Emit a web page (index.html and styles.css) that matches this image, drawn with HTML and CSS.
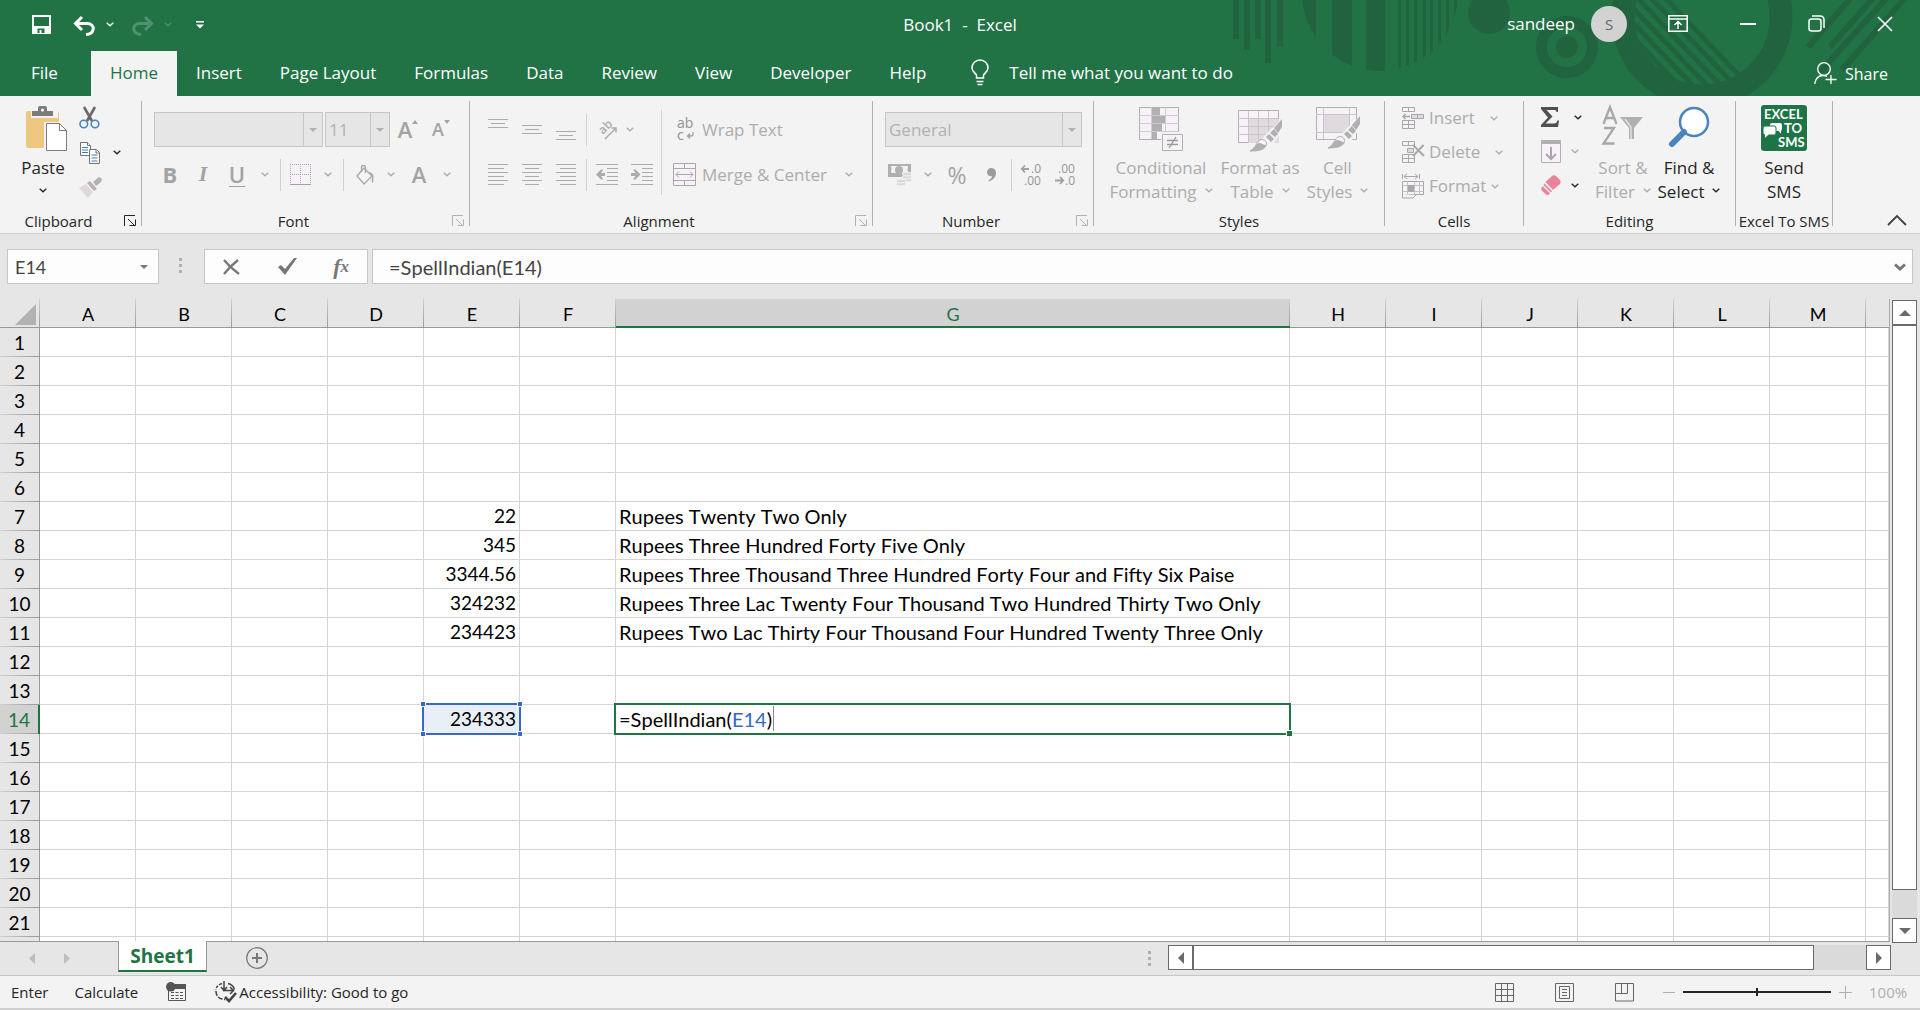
FILE: index.html
```html
<!DOCTYPE html>
<html lang="en">
<head>
<meta charset="utf-8">
<title>Book1 - Excel</title>
<link rel="stylesheet" href="styles.css">
</head>
<body>
<svg class="defs" aria-hidden="true">
  <symbol id="chev" viewBox="0 0 8 5"><path d="M.7.8 4 3.8 7.300.8" fill="none" stroke="currentColor" stroke-width="1.400"/></symbol>
  <symbol id="tri" viewBox="0 0 8 4"><path d="M0 0h8L4 4z" fill="currentColor"/></symbol>
  <symbol id="launch" viewBox="0 0 12 12"><path d="M.5 11V.5H11M4 4l6 6M5.500 10.500h6V4.500" fill="none" stroke="currentColor"/></symbol>
  <symbol id="brush" viewBox="0 0 34 33"><path d="M1 32c6-3 6-9 10-11 4-2 8 2 6 6-2 4-8 5-16 5z" fill="#f6f2f8" stroke="#b1afb1"/><path d="M1 32c6-3 6-8 9-8 3 0 4 2 7 2-2 5-8 6-16 6z" fill="#b1afb1"/><path d="m20 15 5 5-3 3-5-5zM25 10l4 5-3 3-5-4zM33 0v8l-4 6-4-5z" fill="#b1afb1"/></symbol>
</svg>

<header class="top">
  <svg class="pattern" width="700" height="96" viewBox="1220 0 700 96" aria-hidden="true">
    <defs>
      <clipPath id="c1"><circle cx="1380" cy="-7" r="78"/></clipPath>
      <clipPath id="c2"><circle cx="1702" cy="17" r="68"/></clipPath>
    </defs>
    <g fill="#22633f">
      <path d="M1233 0h6v39h-6zM1244 0h6v50h-6zM1255 0h6v39h-6zM1265 0h6v63h-6zM1277 0h6v46h-6z"/>
      <path clip-path="url(#c1)" d="M1300 0h16v80h-16zM1332 0h20v80h-20zM1366 0h19v80h-19zM1398 0h3v80h-3zM1406 0h3v80h-3zM1414 0h3v80h-3zM1423 0h3v80h-3zM1430 0h3v80h-3zM1438 0h3v80h-3zM1446 0h3v80h-3zM1454 0h3v80h-3z"/>
      <circle cx="1489" cy="13" r="21"/>
      <circle cx="1567" cy="47" r="11"/>
    </g>
    <g fill="none" stroke="#22633f">
      <circle cx="1567" cy="47" r="25.500" stroke-width="11"/>
      <circle cx="1702" cy="17" r="79" stroke-width="23"/>
      <path clip-path="url(#c2)" stroke-width="5" d="m1578-20 110 115M1592-20l110 115M1606-20l110 115M1620-20l110 115M1634-20l110 115M1648-20l110 115"/>
      <path stroke-width="6" d="m1808 47 50-57M1830 47l50-57M1820 72l74-82M1842 70l70-80"/>
    </g>
  </svg>

  <div class="titlebar">
    <div class="quick">
      <button class="ib q-save" aria-label="Save"><svg width="19" height="19"><path d="M1 1h17v17H1z" fill="none" stroke="#fff" stroke-width="2"/><path d="M2 11h15v7H2z" fill="#fff"/><path d="M5.500 13.500h7V18h-3v-3h-2v3h-2z" fill="#217346"/></svg></button>
      <button class="ib q-undo" aria-label="Undo"><svg width="23" height="20"><path d="M2 7.500h12c9 0 8 11-1 11" fill="none" stroke="#fff" stroke-width="3"/><path d="M9 1 2.500 7.500 9 14" fill="none" stroke="#fff" stroke-width="3"/></svg></button>
      <button class="ib q-ch" aria-label="Undo list"><svg width="8" height="5"><use href="#chev"/></svg></button>
      <button class="ib q-redo" aria-label="Redo"><svg width="23" height="20"><path d="M21 7.500H9c-9 0-8 11 1 11M14 1l6.500 6.500L14 14" fill="none" stroke="currentColor" stroke-width="3"/></svg></button>
      <button class="ib q-ch dim" aria-label="Redo list"><svg width="8" height="5"><use href="#chev"/></svg></button>
      <button class="ib q-more" aria-label="Customize toolbar"><svg width="8" height="8"><path d="M0 0h8v1.500H0zM0 3.500h8L4 7.500z" fill="#fff"/></svg></button>
    </div>
    <div class="doc">Book1&nbsp; -&nbsp; Excel</div>
    <div class="account">
      <span>sandeep</span><span class="avatar">S</span>
      <div class="wins">
        <button class="ib" aria-label="Ribbon options"><svg width="20" height="17" fill="none" stroke="#fff" stroke-width="1.500"><path d="M.8.8h18.400v15.400H.8zM.8 4h18.400M10 14V6.500M6.500 10 10 6.500l3.500 3.500"/></svg></button>
        <button class="ib" aria-label="Minimize"><svg width="16" height="2"><path d="M0 0h16v2H0z" fill="#fff"/></svg></button>
        <button class="ib" aria-label="Restore"><svg width="17" height="17" fill="none" stroke="#fff" stroke-width="1.500"><rect x="1" y="4" width="12" height="12" rx="2.500"/><path d="M4 1h8q4 0 4 4v8"/></svg></button>
        <button class="ib" aria-label="Close"><svg width="16" height="16"><path d="m1 1 14 14M15 1 1 15" stroke="#fff" stroke-width="1.600"/></svg></button>
      </div>
    </div>
  </div>

  <nav class="tabs">
    <button class="tab file">File</button><button class="tab home">Home</button><button class="tab">Insert</button><button class="tab">Page Layout</button><button class="tab">Formulas</button><button class="tab">Data</button><button class="tab">Review</button><button class="tab">View</button><button class="tab">Developer</button><button class="tab">Help</button>
    <button class="tell"><svg width="18" height="26" fill="none" stroke="#fff" stroke-width="1.500"><path d="M5.500 18v-3C3.500 12.500 1 11 1 8a8 8 0 0 1 16 0c0 3-2.500 4.500-4.500 7v3zM5.500 21.500h7M6.500 24.500h5"/></svg>Tell me what you want to do</button>
    <button class="share"><svg width="23" height="23" fill="none" stroke="#fff" stroke-width="1.300"><circle cx="10" cy="7" r="6.300"/><path d="M.7 22c1-6 4-8.500 8.300-8.500 2 0 3 .3 4 1M17 13v9M11.500 17.500h11"/></svg>Share</button>
  </nav>
</header>

<section class="ribbon">
  <div class="group g-clip">
    <div class="body">
      <button class="big paste"><svg width="42" height="46"><path d="M2 5h30v37H2q-2 0-2-2V7q0-2 2-2z" fill="#eec880"/><path d="M33 7v12H20v18h2V5h9q2 0 2 2z" fill="#eec880"/><path d="M5 4h27v8H5z" fill="#f3f3f3"/><path d="M6 5h6V2q0-2 2-2h5q2 0 2 2v3h6v5H6z" fill="#7c7c7c"/><circle cx="16.500" cy="4" r="1.500" fill="#fff"/><path d="M18 16h17l7 7v23H18z" fill="#f3f3f3"/><path d="M20.500 17.500h13l7 7v20h-20z" fill="#fff" stroke="#7c7c7c"/><path d="M33.500 17.500v7h7" fill="none" stroke="#7c7c7c"/></svg><span>Paste</span><svg class="ch" width="8" height="5"><use href="#chev"/></svg></button>
      <div class="stack">
        <button class="ib" aria-label="Cut"><svg width="21" height="22"><path d="m5 0 8 14M16 0 8 14" stroke="#6a6a6a" stroke-width="2.600"/><g fill="none" stroke="#4a84bf" stroke-width="1.600"><circle cx="4.800" cy="17" r="3.800"/><circle cx="16" cy="17" r="3.800"/></g></svg></button>
        <span class="pair"><button class="ib" aria-label="Copy"><svg width="21" height="22" fill="#fff" stroke="#737373"><path d="M1.500.5h7l3 3v10h-10z"/><path d="M8.500.5v3h3" /><path d="M3 5.500h6M3 8h6M3 10.500h6" stroke="#3f7cb5"/><path d="M10.500 7.500h7l3 3v11h-10z"/><path d="M17 7.500v3.500h3.500"/><path d="M12.500 13h6M12.500 16h6M12.500 19h6" stroke="#3f7cb5"/></svg></button><button class="ib" aria-label="Copy options"><svg width="8" height="5"><use href="#chev"/></svg></button></span>
        <button class="ib" aria-label="Format Painter"><svg width="23" height="21"><path d="m0 11 7-4 7 8-5 6z" fill="#dcd8dc"/><path d="m8 6 3-2 7 8-3 2zM14 5l6-5 3 2-1 3-5 4z" fill="#b3b1b3"/></svg></button>
      </div>
    </div>
    <div class="foot"><span>Clipboard</span><button class="ib" aria-label="Clipboard settings"><svg width="12" height="12"><use href="#launch"/></svg></button></div>
  </div>

  <div class="group g-font off">
    <div class="body">
      <div class="row r1">
        <span class="combo"><select disabled aria-label="Font"><option></option></select><i><svg width="8" height="4"><use href="#tri"/></svg></i></span>
        <span class="combo"><select disabled aria-label="Font size"><option>11</option></select><i><svg width="8" height="4"><use href="#tri"/></svg></i></span>
        <button class="ib letter grow" aria-label="Increase font size">A<svg width="6" height="4"><path d="M0 4 3 0l3 4z" fill="currentColor"/></svg></button>
        <button class="ib letter shrink" aria-label="Decrease font size">A<svg width="6" height="4"><path d="M0 0h6L3 4z" fill="currentColor"/></svg></button>
      </div>
      <div class="row r2">
        <button class="ib letter b">B</button><button class="ib letter i">I</button><button class="ib letter u">U</button><button class="ib" aria-label="Underline options"><svg width="8" height="5"><use href="#chev"/></svg></button><i class="sep"></i>
        <button class="ib" aria-label="Borders"><svg width="21" height="21"><path d="M0 0h21v21H0z" fill="#f6f2f8"/><path d="M0 .5h21M0 10.500h21M.5 0v20M10.500 0v20M20.500 0v20" stroke="#a9a7a9" stroke-dasharray="1 1"/><path d="M0 20.500h21" stroke="#a0a0a0"/></svg></button><button class="ib" aria-label="Border options"><svg width="8" height="5"><use href="#chev"/></svg></button><i class="sep"></i>
        <button class="ib" aria-label="Fill colour"><svg width="19" height="20"><path d="m8 3 8 8-8 8-7-8z" fill="#f6f2f8" stroke="#a9a7a9" stroke-width="1.300"/><path d="M5.500 7V2q0-1.500 2-1.500t2 1.500v6" fill="none" stroke="#a9a7a9" stroke-width="1.300"/><path d="M13 7c5 1 5 4 4 11-2-1-1-4-1-7z" fill="#a9a7a9"/></svg></button><button class="ib" aria-label="Fill options"><svg width="8" height="5"><use href="#chev"/></svg></button>
        <button class="ib letter" aria-label="Font colour">A</button><button class="ib" aria-label="Font colour options"><svg width="8" height="5"><use href="#chev"/></svg></button>
      </div>
    </div>
    <div class="foot"><span>Font</span><button class="ib" aria-label="Font settings"><svg width="12" height="12"><use href="#launch"/></svg></button></div>
  </div>

  <div class="group g-align off">
    <div class="body">
      <div class="acols">
        <div class="row">
          <button class="ib" aria-label="Top align"><svg width="20" height="22"><path d="M0 .5h20M3 4.500h14M0 8.500h20" stroke="currentColor"/></svg></button>
          <button class="ib" aria-label="Middle align"><svg width="20" height="22"><path d="M0 6.500h20M3 10.500h14M0 14.500h20" stroke="currentColor"/></svg></button>
          <button class="ib" aria-label="Bottom align"><svg width="20" height="22"><path d="M0 12.500h20M3 16.500h14M0 20.500h20" stroke="currentColor"/></svg></button>
          <i class="sep"></i>
          <button class="ib" aria-label="Orientation"><svg width="21" height="20"><text x="0" y="0" transform="translate(6 15) rotate(-45)" font-size="12" font-weight="600" fill="currentColor">ab</text><path d="M8 19 19 8M14.500 8H19v4.500" fill="none" stroke="currentColor" stroke-width="1.500"/></svg></button>
          <button class="ib" aria-label="Orientation options"><svg width="8" height="5"><use href="#chev"/></svg></button>
        </div>
        <div class="row">
          <button class="ib" aria-label="Align left"><svg width="20" height="22"><path d="M0 .5h20M0 4.500h16M0 8.500h20M0 12.500h16M0 16.500h20M0 20.500h16" stroke="currentColor"/></svg></button>
          <button class="ib" aria-label="Center"><svg width="20" height="22"><path d="M0 .5h20M3 4.500h14M0 8.500h20M3 12.500h14M0 16.500h20M3 20.500h14" stroke="currentColor"/></svg></button>
          <button class="ib" aria-label="Align right"><svg width="20" height="22"><path d="M0 .5h20M4 4.500h16M0 8.500h20M4 12.500h16M0 16.500h20M4 20.500h16" stroke="currentColor"/></svg></button>
          <i class="sep"></i>
          <button class="ib" aria-label="Decrease indent"><svg width="22" height="22"><path d="M0 .5h22M11 4.500h11M11 8.500h11M11 12.500h11M11 16.500h11M0 20.500h22" stroke="currentColor"/><path d="m0 10.500 5-5h2.500L5 9h4v3H5l2.500 3.500H5z" fill="currentColor"/></svg></button>
          <button class="ib" aria-label="Increase indent"><svg width="22" height="22"><path d="M0 .5h22M11 4.500h11M11 8.500h11M11 12.500h11M11 16.500h11M0 20.500h22" stroke="currentColor"/><path d="m9.500 10.500-5-5H2L4.500 9H0v3h4.500L2 15.500h2.500z" fill="currentColor"/></svg></button>
        </div>
      </div>
      <i class="sep tall"></i>
      <div class="wraps">
        <button class="txt"><svg width="24" height="26"><text x="4" y="11" font-size="14" fill="#909090">ab</text><text x="4" y="23" font-size="14" fill="#909090">c</text><path d="M20 15v2q0 2-2 2h-3M17 16.500 14.500 19l2.500 2.500" fill="none" stroke="#a0a0a0" stroke-width="1.300"/></svg>Wrap Text</button>
        <button class="txt"><svg width="24" height="24"><path d="M.5.500h22v22H.5z" fill="#f6f2f8" stroke="#a9a7a9"/><path d="M0 5.500h23M0 17.500h23M11.500 0v5.500M11.500 17.500V23M3 11.500h17M6 8.500l-3 3 3 3M17 8.500l3 3-3 3" fill="none" stroke="#a9a7a9"/></svg>Merge &amp; Center<svg class="ch far" width="8" height="5"><use href="#chev"/></svg></button>
      </div>
    </div>
    <div class="foot"><span>Alignment</span><button class="ib" aria-label="Alignment settings"><svg width="12" height="12"><use href="#launch"/></svg></button></div>
  </div>

  <div class="group g-num off">
    <div class="body">
      <div class="row r1"><span class="combo"><select disabled aria-label="Number format"><option>General</option></select><i><svg width="8" height="4"><use href="#tri"/></svg></i></span></div>
      <div class="row r2">
        <button class="ib" aria-label="Accounting format"><svg width="24" height="23"><path d="M0 1h23v13H0z" fill="#b1afb1"/><path d="M3 3h17q-1 4 0 7H3q1-4 0-7z" fill="#f3f3f3"/><circle cx="11" cy="7" r="4" fill="#b1afb1"/><g fill="#dcd8dc" stroke="#f3f3f3"><ellipse cx="19" cy="17" rx="5" ry="2"/><ellipse cx="19" cy="14" rx="5" ry="2"/><ellipse cx="19" cy="11" rx="5" ry="2"/><ellipse cx="13" cy="21" rx="5" ry="2"/><ellipse cx="13" cy="18" rx="5" ry="2"/></g></svg></button><button class="ib" aria-label="Accounting options"><svg width="8" height="5"><use href="#chev"/></svg></button>
        <button class="ib pct">%</button><button class="ib" aria-label="Comma style"><svg width="9" height="14"><path d="M4 0c4 0 5 3 5 5 0 4-3 7-7 8.500l-.5-1C4 11 5 9.500 5 8.300 2 8.500 0 6.500 0 4.200 0 1.800 2 0 4 0z" fill="#9c9c9c"/></svg></button><i class="sep"></i>
        <button class="ib" aria-label="Increase decimal"><svg width="24" height="24" font-size="12" fill="#959595"><text x="11" y="10">.0</text><text x="4" y="22">.00</text><path d="M9 6H2M5 2.500 1.800 6 5 9.500" fill="none" stroke="#a0a0a0" stroke-width="1.800"/></svg></button>
        <button class="ib" aria-label="Decrease decimal"><svg width="24" height="24" font-size="12" fill="#959595"><text x="4" y="10">.00</text><text x="11" y="22">.0</text><path d="M1 17.500h8M6 14l3.200 3.500L6 21" fill="none" stroke="#a0a0a0" stroke-width="1.800"/></svg></button>
      </div>
    </div>
    <div class="foot"><span>Number</span><button class="ib" aria-label="Number settings"><svg width="12" height="12"><use href="#launch"/></svg></button></div>
  </div>

  <div class="group g-styles off">
    <div class="body">
      <button class="big"><svg width="44" height="46"><path d="M.5 1.500h39v32H.5z" fill="#f6f2f8" stroke="#b1afb1"/><path d="M0 9.500h40M0 17.500h40M0 25.500h40M12.500 1v32M26.500 1v32" stroke="#cfcccf"/><path d="M13 2h8v7h-8zM13 10h13v7H13zM13 18h10v7H13zM13 26h5v7h-5z" fill="#b1afb1"/><path d="M22 26h22v20H22z" fill="#f3f3f3"/><path d="M23.500 28.500h20v16h-20z" fill="#f6f2f8" stroke="#b1afb1"/><path d="M28 34.500h11M28 38.500h11M37 31l-7 11" stroke="#9a9a9a" stroke-width="1.300"/></svg><span>Conditional</span><span>Formatting<svg class="ch" width="8" height="5"><use href="#chev"/></svg></span></button>
      <button class="big"><svg width="44" height="46"><path d="M.5 4.500h40v32H.5z" fill="#f6f2f8" stroke="#b1afb1"/><path d="M11 13h30v24H11z" fill="#dedade"/><path d="M0 12.500h40M0 20.500h40M0 28.500h40M10.500 5v32M20.500 5v32M30.500 5v32" stroke="#c9c6c9"/><path d="M44 13v12L30 46H12l18-20z" fill="#f3f3f3"/><svg x="11" y="13" width="34" height="33"><use href="#brush"/></svg></svg><span>Format as</span><span>Table<svg class="ch" width="8" height="5"><use href="#chev"/></svg></span></button>
      <button class="big"><svg width="44" height="46"><path d="M.5 1.500h40v32H.5z" fill="#f6f2f8" stroke="#b1afb1"/><path d="M8 9h26v18H8z" fill="#dedade"/><path d="M0 8.500h40M0 26.500h40M7.500 1v32M33.500 1v32" stroke="#c9c6c9"/><path d="M44 10v12L30 43H12l18-20z" fill="#f3f3f3"/><svg x="11" y="10" width="34" height="33"><use href="#brush"/></svg></svg><span>Cell</span><span>Styles<svg class="ch" width="8" height="5"><use href="#chev"/></svg></span></button>
    </div>
    <div class="foot"><span>Styles</span></div>
  </div>

  <div class="group g-cells off">
    <div class="body">
      <button class="txt"><svg width="22" height="22" fill="#f6f2f8" stroke="#a9a7a9"><path d="M.5.500h12v4H.5zM6.500.500v4M.5 13.500h12v8H.5zM6.500 13.500v8M.5 17.500h12"/><path d="M9.500 7.500h12v4h-12zM15.500 7.500v4" fill="#dedade"/><path d="M8 9.500H1M3.500 7 1 9.500 3.500 12" fill="none" stroke-width="1.400"/></svg>Insert<svg class="ch c1" width="8" height="5"><use href="#chev"/></svg></button>
      <button class="txt"><svg width="22" height="22" fill="#f6f2f8" stroke="#a9a7a9"><path d="M.5.500h12v4H.5zM6.500.500v4M.5 13.500h12v8H.5zM6.500 13.500v8M.5 17.500h12"/><path d="M5.500 7.500h6v4h-6z" fill="#dedade"/><path d="m11 4 11 11M21.500 4 11 15" fill="none" stroke-width="2"/></svg>Delete<svg class="ch c1" width="8" height="5"><use href="#chev"/></svg></button>
      <button class="txt"><svg width="22" height="25" fill="#f6f2f8" stroke="#a9a7a9"><path d="M.5 0v5M17.500 0v5M2 2.500h14M5 0 2 2.500 5 5M13 0l3 2.500L13 5" fill="none"/><path d="M.5 7.500h21v13H.5z"/><path d="M.5 11.500h21M.5 17.500h21M5.500 7.500v13M12.500 7.500v13M17.500 7.500v13" stroke="#c4c1c4"/><path d="M6 11h6v7H6z" fill="#a9a7a9" stroke="none"/><path d="M.5 20v4H11l3-3"/></svg>Format<svg class="ch" width="8" height="5"><use href="#chev"/></svg></button>
    </div>
    <div class="foot"><span>Cells</span></div>
  </div>

  <div class="group g-edit">
    <div class="body">
      <div class="estack">
        <button class="ib wide" aria-label="AutoSum"><svg width="18" height="20"><path d="M0 0h17v5h-1.500q0-2-2-2H5.500l6 6.500-7 7H13q3 0 3.300-3H18L17 20H0v-2l7-7.500L0 2z" fill="#505050"/></svg><svg width="8" height="5"><use href="#chev"/></svg></button>
        <button class="ib off" aria-label="Fill"><svg width="20" height="23"><path d="M.5 1.500h19v21H.5z" fill="#f6f2f8" stroke="#b1afb1"/><path d="M0 0h20v4H0z" fill="#b1afb1"/><path d="M10 7v12M5 14l5 5 5-5" fill="none" stroke="#a9a7a9" stroke-width="2"/></svg><svg width="8" height="5"><use href="#chev"/></svg></button>
        <button class="ib" aria-label="Clear"><svg width="20" height="21"><path d="M11 1q2-1.500 4 0l4 4q1.500 2 0 4l-7 6-7.500-8z" fill="#e8859a"/><path d="M3.500 8.500 11 16l-3 3.500q-1.500 1-3 0L.8 15.500q-1.500-1.500 0-3z" fill="#e8859a"/><path d="m2 10.500 8 8" stroke="#f3f3f3" stroke-width="1.300"/></svg><svg width="8" height="5"><use href="#chev"/></svg></button>
      </div>
      <button class="big off sort"><svg width="42" height="46"><path d="m1.500 18 6.500-17 6.500 17M3.500 12h9M2 22h10L1.500 37.500h11" fill="none" stroke="#a9a7a9" stroke-width="2.300"/><path d="M18 11h23L32 22v11h-5V22z" fill="#b1afb1"/><path d="m23 13 6 8v11h1" fill="none" stroke="#e8e8e8" stroke-width="1.300"/></svg><span>Sort &amp;</span><span>Filter<svg class="ch" width="8" height="5"><use href="#chev"/></svg></span></button>
      <button class="big find"><svg width="42" height="46"><circle cx="26" cy="16" r="14" fill="#fff" stroke="#4a84bf" stroke-width="2.500"/><path d="M16 26 4 38" stroke="#4a84bf" stroke-width="6" stroke-linecap="round"/></svg><span>Find &amp;</span><span>Select<svg class="ch" width="8" height="5"><use href="#chev"/></svg></span></button>
    </div>
    <div class="foot"><span>Editing</span></div>
  </div>

  <div class="group g-sms">
    <div class="body">
      <button class="big"><svg width="48" height="48" font-size="13" font-weight="700" fill="#fff"><path d="M0 0h48v48H0z"/><rect x="1" y="1" width="46" height="46" rx="3" fill="#1c7447"/><text x="4" y="15">EXCEL</text><text x="24" y="29">TO</text><text x="18" y="43">SMS</text><rect x="10" y="19" width="12" height="8" rx="2"/><path d="M18 26h3v4z"/><rect x="3" y="22" width="13" height="9" rx="2" stroke="#1c7447"/><path d="M5 30v4l4-4z"/></svg><span>Send</span><span>SMS</span></button>
    </div>
    <div class="foot"><span>Excel To SMS</span></div>
  </div>
  <button class="ib collapse" aria-label="Collapse ribbon"><svg width="20" height="12"><path d="m1 11 9-9 9 9" fill="none" stroke="#404040" stroke-width="1.800"/></svg></button>
</section>

<section class="fbar">
  <div class="box name"><input aria-label="Name box" value="E14"><svg width="8" height="4"><use href="#tri"/></svg></div>
  <i class="dots"></i>
  <div class="box acts">
    <button class="ib" aria-label="Cancel"><svg width="18" height="16"><path d="M2 1c4 5 8 9 15 14M16 1C11 5 6 10 2 15" fill="none" stroke="#777" stroke-width="2.300"/></svg></button>
    <button class="ib" aria-label="Enter"><svg width="20" height="17"><path d="m1 9 3-2 4 4 9-11h3L8 17z" fill="#777"/></svg></button>
    <button class="ib fx" aria-label="Insert function">f<small>x</small></button>
  </div>
  <div class="box formula"><input aria-label="Formula" value="=SpellIndian(E14)"><svg width="12" height="8"><path d="m1 1.500 5 4.500 5-4.500" fill="none" stroke="#777" stroke-width="3"/></svg></div>
</section>

<main class="work">
  <div class="sheet">
    <table>
      <colgroup><col class="ch0"><col span="6" class="cw"><col class="cg"><col span="6" class="cw"><col></colgroup>
      <thead><tr><th class="corner"><svg width="21" height="21"><path d="M21 0v21H0z" fill="#b2b2b2"/></svg></th><th>A</th><th>B</th><th>C</th><th>D</th><th>E</th><th>F</th><th class="sel">G</th><th>H</th><th>I</th><th>J</th><th>K</th><th>L</th><th>M</th><th></th></tr></thead>
      <tbody>
      <tr><th>1<td><td><td><td><td><td><td><td><td><td><td><td><td><td>
      <tr><th>2<td><td><td><td><td><td><td><td><td><td><td><td><td><td>
      <tr><th>3<td><td><td><td><td><td><td><td><td><td><td><td><td><td>
      <tr><th>4<td><td><td><td><td><td><td><td><td><td><td><td><td><td>
      <tr><th>5<td><td><td><td><td><td><td><td><td><td><td><td><td><td>
      <tr><th>6<td><td><td><td><td><td><td><td><td><td><td><td><td><td>
      <tr><th>7<td><td><td><td><td class="n">22<td><td>Rupees Twenty Two Only<td><td><td><td><td><td><td>
      <tr><th>8<td><td><td><td><td class="n">345<td><td>Rupees Three Hundred Forty Five Only<td><td><td><td><td><td><td>
      <tr><th>9<td><td><td><td><td class="n">3344.56<td><td>Rupees Three Thousand Three Hundred Forty Four and Fifty Six Paise<td><td><td><td><td><td><td>
      <tr><th>10<td><td><td><td><td class="n">324232<td><td>Rupees Three Lac Twenty Four Thousand Two Hundred Thirty Two Only<td><td><td><td><td><td><td>
      <tr><th>11<td><td><td><td><td class="n">234423<td><td>Rupees Two Lac Thirty Four Thousand Four Hundred Twenty Three Only<td><td><td><td><td><td><td>
      <tr><th>12<td><td><td><td><td><td><td><td><td><td><td><td><td><td>
      <tr><th>13<td><td><td><td><td><td><td><td><td><td><td><td><td><td>
      <tr><th class="sel">14<td><td><td><td><td class="n ref">234333<i class="h tl"></i><i class="h tr"></i><i class="h bl"></i><i class="h br"></i><td><td class="edit">=SpellIndian(<span>E14</span>)<i class="caret"></i><i class="knob"></i><td><td><td><td><td><td><td>
      <tr><th>15<td><td><td><td><td><td><td><td><td><td><td><td><td><td>
      <tr><th>16<td><td><td><td><td><td><td><td><td><td><td><td><td><td>
      <tr><th>17<td><td><td><td><td><td><td><td><td><td><td><td><td><td>
      <tr><th>18<td><td><td><td><td><td><td><td><td><td><td><td><td><td>
      <tr><th>19<td><td><td><td><td><td><td><td><td><td><td><td><td><td>
      <tr><th>20<td><td><td><td><td><td><td><td><td><td><td><td><td><td>
      <tr><th>21<td><td><td><td><td><td><td><td><td><td><td><td><td><td>
      <tr><th><td><td><td><td><td><td><td><td><td><td><td><td><td><td>
      </tbody>
    </table>
  </div>
  <div class="vbar">
    <button class="sb" aria-label="Scroll up"><svg width="12" height="6"><path d="M0 6 6 0l6 6z" fill="#6a6a6a"/></svg></button>
    <div class="vthumb"></div><div class="vtrack"></div>
    <button class="sb" aria-label="Scroll down"><svg width="12" height="6"><path d="M0 0h12L6 6z" fill="#6a6a6a"/></svg></button>
  </div>
</main>

<section class="sheets">
  <button class="ib nav" aria-label="Previous sheet"><svg width="6" height="11"><path d="M6 0v11L0 5.500z" fill="#bdbdbd"/></svg></button>
  <button class="ib nav" aria-label="Next sheet"><svg width="6" height="11"><path d="M0 0v11l6-5.500z" fill="#bdbdbd"/></svg></button>
  <button class="stab">Sheet1</button>
  <button class="ib" aria-label="New sheet"><svg width="22" height="22" fill="none" stroke="#777"><circle cx="11" cy="11" r="10.300" stroke-width="1.200"/><path d="M11 6v10M6 11h10" stroke-width="2"/></svg></button>
  <i class="dots"></i>
  <div class="hbar">
    <button class="sb" aria-label="Scroll left"><svg width="6" height="12"><path d="M6 0v12L0 6z" fill="#6a6a6a"/></svg></button>
    <div class="hthumb"></div><div class="htrack"></div>
    <button class="sb" aria-label="Scroll right"><svg width="6" height="12"><path d="M0 0v12l6-6z" fill="#6a6a6a"/></svg></button>
  </div>
</section>

<footer class="status">
  <span class="mode">Enter</span><span class="calc">Calculate</span>
  <button class="ib macro" aria-label="Record macro"><svg width="20" height="20"><path d="M2.500 7v11.500h17V3" fill="none" stroke="#555"/><path d="M9 2h11v5H9z" fill="#555"/><circle cx="4.800" cy="4.800" r="4.800" fill="#555"/><path d="M5 10.500h3M9.500 10.500h3M14 10.500h3M5 13.500h3M9.500 13.500h3M14 13.500h3M5 16.500h3M9.500 16.500h3M14 16.500h3" stroke="#555"/></svg></button>
  <button class="acc"><svg width="22" height="22" fill="none" stroke="#444" stroke-width="1.500"><path d="M7 2.500Q1 4.500 1 9" stroke-dasharray="3 1.500"/><path d="M1 10q0 8 9 8.500" stroke-dasharray="5 1.500"/><path d="M13 2.500q5 1 6.500 6"/><path d="M9 0v9M6 6l3 3.500L12 6M8 9.500h10M15 6l3.500 3.500L15 13"/><path d="m10 16 4 4 7-8" stroke-width="2.600"/></svg>Accessibility: Good to go</button>
  <div class="views">
    <button class="ib" aria-label="Normal view"><svg width="19" height="19" fill="none" stroke="#666"><path d="M.5.500h18v18H.5zM6.500 0v19M12.500 0v19M0 6.500h19M0 12.500h19"/></svg></button>
    <button class="ib" aria-label="Page layout view"><svg width="19" height="19" fill="none" stroke="#666"><path d="M.5.500h18v18H.5zM4.500 3.500h10v12h-10zM7 6.500h5M7 9.500h5M7 12.500h5"/></svg></button>
    <button class="ib" aria-label="Page break view"><svg width="19" height="19" fill="none" stroke="#666"><path d="M.5.500h18v17.500H.5zM.5 10.500h12V.5M6.500.500v10"/></svg></button>
  </div>
  <div class="zoom">
    <button class="ib" aria-label="Zoom out"><svg width="12" height="13"><path d="M0 6.500h12" stroke="#b0b0b0"/></svg></button>
    <input type="range" aria-label="Zoom" min="0" max="100" value="50">
    <button class="ib" aria-label="Zoom in"><svg width="13" height="13"><path d="M0 6.500h13M6.500 0v13" stroke="#b0b0b0"/></svg></button>
    <span>100%</span>
  </div>
</footer>
</body>
</html>
```
FILE: styles.css
```css
* { box-sizing: border-box; }
body {
  margin: 0;
  display: flex;
  flex-direction: column;
  height: 100vh;
  font: 17px/24px "Open Sans", "Noto Sans", sans-serif;
  color: #262626;
  background: #e6e6e6;
  overflow: hidden;
}
button, input, select { font: inherit; color: inherit; background: none; border: 0; padding: 0; margin: 0; }
button { white-space: nowrap; }
i { font-style: normal; }
svg { flex: none; display: block; overflow: visible; }
.defs { position: absolute; width: 0; height: 0; }
.ib { display: flex; align-items: center; justify-content: center; }
.off { color: #acacac; }

/* Title bar and tabs */
.top { position: relative; background: #217346; color: #fff; flex: none; overflow: hidden; }
.pattern { position: absolute; top: 0; right: 0; overflow: hidden; }
.titlebar { position: relative; display: grid; grid-template-columns: 1fr auto 1fr; height: 51px; }
.quick { display: flex; align-items: center; padding: 0 0 2px 32px; }
.q-save { margin-right: 22px; }
.q-ch { width: 28px; }
.q-undo { margin-top: 2px; }
.q-redo { margin: 2px 0 0 7px; color: #4f9170; }
.dim { color: #4f9170; }
.q-more { margin-left: 14px; }
.doc { line-height: 50px; }
.account { display: flex; align-items: center; justify-content: flex-end; padding-bottom: 4px; }
.avatar { width: 36px; height: 36px; margin: 0 41px 0 16px; border-radius: 50%; background: #d2d2d2; color: #666; font-size: 15px; line-height: 36px; text-align: center; }
.wins { display: flex; gap: 52px; padding-right: 27px; }
.tabs { position: relative; display: flex; height: 45px; }
.tab { padding: 0 19px 1px; line-height: 42px; }
.file { padding: 0 33px 1px 31px; }
.tell { display: flex; align-items: center; gap: 20px; padding: 0 0 2px 26px; }
.home { background: #f3f3f3; color: #217346; }
.share { display: flex; align-items: center; gap: 8px; margin-left: auto; padding-right: 32px; font-size: 16px; }

/* Ribbon */
.ribbon { display: flex; flex: none; background: #f3f3f3; border-bottom: 1px solid #d0d0d0; height: 138px; padding: 5px 0 7px; }
.group { display: flex; flex-direction: column; flex: none; border-right: 1px solid #b1b1b1; }
.body { flex: 1; display: flex; }
.foot { display: grid; grid-template-columns: 1fr 24px; align-items: center; height: 20px; margin-bottom: -5px; font-size: 15px; line-height: 20px; color: #262626; text-align: center; white-space: nowrap; }
.foot .ib { justify-content: flex-start; padding-left: 7px; }
.off .foot .ib { color: #b1b1b1; }
.g-styles .foot, .g-cells .foot, .g-edit .foot, .g-sms .foot { grid-template-columns: 1fr; }
.row { display: grid; align-items: center; height: 45px; }
.sep { width: 1px; height: 32px; background: #d0d0d0; justify-self: center; }
.big { display: flex; flex-direction: column; align-items: center; align-self: flex-start; padding-top: 5px; }
.big > svg:first-child { margin-bottom: 4px; }
.big span { display: flex; align-items: center; gap: 8px; }
.big .ch { margin-top: -4px; }
.txt { display: flex; align-items: center; }

.g-clip { width: 142px; }
.g-clip .body { padding-left: 16px; gap: 9px; }
.paste { width: 54px; }
.paste > svg:first-child { margin: 0 0 4px 8px; }
.paste .ch { margin-top: 8px; }
.stack, .estack { display: grid; grid-template-rows: 35px 35px 35px; height: 105px; justify-items: start; align-items: center; margin-top: -1px; }
.estack { grid-template-rows: 34px 34px 34px; height: 102px; }
.pair { display: flex; gap: 13px; }

.g-font { width: 328px; }
.g-font .body { flex-direction: column; padding: 6px 0 0 12px; }
.g-font .r1 { grid-template-columns: 169px 65px 32px 30px; column-gap: 2px; }
.g-font .r2 { grid-template-columns: 32px 34px 34px 22px 8px 32px 24px 6px 38px 14px 42px 14px; }
.combo { display: flex; height: 35px; background: #e6e6e6; border: 1px solid #c6c6c6; }
.combo select { appearance: none; flex: 1; min-width: 0; padding-left: 3px; color: #b1b1b1; opacity: 1; }
.combo i { width: 19px; border-left: 1px solid #c6c6c6; display: grid; place-items: center; color: #b1b1b1; }
.letter { font-size: 22px; font-weight: 600; color: #a3a3a3; padding-bottom: 2px; }
.grow svg, .shrink svg { align-self: flex-start; margin-top: 3px; }
.shrink { font-size: 18px; }
.b { font-weight: 700; }
.i { font-family: "Liberation Serif", serif; font-style: italic; font-weight: 700; }
.u { text-decoration: underline; text-underline-offset: 3px; text-decoration-thickness: 1px; }

.g-align { width: 403px; }
.g-align .body { padding-top: 6px; }
.acols .row { grid-template-columns: 34px 34px 34px 6px 36px 34px; padding-left: 11px; }
.acols .row:first-child .ib:last-child { justify-content: flex-start; padding-left: 1px; }
.tall { height: 85px; margin: 3px 11px 0 2px; }
.wraps { display: grid; grid-auto-rows: 45px; align-content: start; }
.wraps .txt { gap: 5px; }
.far { margin-left: 13px; }

.g-num { width: 221px; }
.g-num .body { flex-direction: column; padding: 6px 0 0 12px; }
.g-num .r1 { grid-template-columns: 197px; }
.g-num .r2 { grid-template-columns: 30px 26px 32px 36px 4px 38px 30px; }
.pct { font-size: 23px; color: #a3a3a3; }

.g-styles { width: 291px; }
.g-styles .body { padding-left: 8px; display: grid; grid-template-columns: 118px 80px 75px; align-items: start; }

.g-cells { width: 139px; }
.g-cells .body { display: grid; grid-template-rows: 34px 34px 34px; justify-items: start; padding-left: 17px; }
.g-cells .txt { gap: 5px; }
.c1 { margin-left: 10px; }

.g-edit { width: 212px; }
.g-edit .body { padding-left: 17px; }
.estack .ib { gap: 10px; }
.estack .wide { gap: 15px; }
.estack { width: 49px; }
.sort, .find { width: 66px; }

.g-sms { width: 97px; }
.g-sms .body { justify-content: center; }
.g-sms .big { padding-top: 3px; }
.g-sms text { font-family: Lato, sans-serif; }
.collapse { align-self: flex-end; margin: 0 13px 0 auto; }

/* Formula bar */
.fbar { display: flex; flex: none; padding: 15px 7px; height: 65px; font: 18px/24px Lato, sans-serif; color: #444; }
.box { display: flex; align-items: center; background: #fdfdfd; border: 1px solid #c6c6c6; }
.box input { flex: 1; min-width: 0; height: 31px; outline: 0; }
.box svg { color: #777; }
.name { width: 152px; padding: 0 10px 0 7px; }
.dots { width: 3px; height: 15px; margin: 9px 22px 0 20px; background: repeating-linear-gradient(#b0b0b0 0 3px, transparent 3px 6px); }
.acts { width: 164px; margin-right: 4px; justify-content: space-between; padding: 0 18px 0 17px; }
.fx { font: italic 700 22px/24px "Liberation Serif", serif; color: #777; }
.fx small { font-size: 17px; }
.formula { flex: 1; padding: 0 6px 0 16px; font-size: 20px; font-kerning: none; }

/* Grid */
.work { flex: 1; display: flex; min-height: 0; }
.sheet { flex: 1; overflow: hidden; background: #fff; border-right: 1px solid #ababab; border-bottom: 1px solid #999; }
table { width: 100%; table-layout: fixed; border-spacing: 0; font: 20px/26px Lato, sans-serif; font-kerning: none; color: #000; }
.ch0 { width: 40px; }
.cw { width: 96px; }
.cg { width: 674px; }
th, td { height: 29px; padding: 0 3px; white-space: nowrap; border-right: 1px solid #d4d4d4; border-bottom: 1px solid #d4d4d4; }
td { text-align: left; }
th { font-weight: 400; font-size: 19px; background: #e6e6e6; text-align: center; padding: 0; }
thead th { font-size: 18px; line-height: 24px; padding-top: 2px; border-right: 0; border-bottom-color: #999; background: linear-gradient(#d0d0d0, #999) right / 1px 100% no-repeat #e6e6e6; }
thead th:last-child { background: #e6e6e6; }
tbody th { border-right-color: #999; border-bottom: 0; background: linear-gradient(90deg, #d0d0d0, #999) bottom / 100% 1px no-repeat #e6e6e6; }
.corner svg { margin-left: 15px; }
thead .sel { background-color: #d2d2d2; border-bottom: 2px solid #217346; color: #217346; }
tbody .sel { background-color: #d2d2d2; border-right: 2px solid #217346; color: #217346; }
.n { text-align: right; font-size: 19px; }
.ref, .edit { position: relative; }
.ref { background: #e8eff9; }
.ref::before { content: ""; position: absolute; inset: -2px; border: 2px solid #3568c8; }
.h { position: absolute; width: 6px; height: 6px; background: #3568c8; border: 1px solid #fff; }
.tl { left: -4px; top: -4px; } .tr { right: -4px; top: -4px; } .bl { left: -4px; bottom: -4px; } .br { right: -4px; bottom: -4px; }
.edit span { color: #3568c8; }
.edit::before { content: ""; position: absolute; inset: -2px; border: 2px solid #217346; }
.caret { display: inline-block; width: 1px; height: 25px; background: #888; vertical-align: top; margin-left: 1px; }
.knob { position: absolute; right: -3px; bottom: -3px; width: 6px; height: 6px; background: #217346; border: 1px solid #fff; border-width: 1px 0 0 1px; }

.vbar { width: 30px; display: flex; flex-direction: column; padding: 1px 3px 0 2px; margin-bottom: -1px; }
.sb { flex: none; width: 25px; height: 25px; display: grid; place-items: center; background: #fff; border: 1px solid #6a6a6a; }
.vthumb { flex: 20; background: #fff; border: 1px solid #6a6a6a; }
.vtrack { flex: 1; background: #dadada; }

/* Sheet tabs */
.sheets { display: flex; flex: none; align-items: flex-start; height: 34px; padding-right: 29px; border-bottom: 1px solid #c6c6c6; }
.sheets > .ib { height: 32px; }
.nav { width: 6px; margin-left: 29px; }
.stab { width: 89px; height: 31px; margin: -1px 39px 0 48px; background: #fff; border: 1px solid #999; border-top: 0; border-bottom: 2px solid #217346; color: #217346; font-size: 19px; font-weight: 700; line-height: 28px; position: relative; }
.sheets .dots { margin: 9px 17px 0 auto; }
.hbar { display: flex; width: 723px; height: 25px; margin-top: 3px; }
.hthumb { flex: 12; background: #fff; border: 1px solid #6a6a6a; }
.htrack { flex: 1; background: #dadada; }

/* Status bar */
.status { display: flex; flex: none; align-items: center; height: 34px; padding: 0 10px 0 11px; background: #f3f3f3; border-bottom: 2px solid #cfcfcf; font-size: 15px; }
.calc { margin-left: 26px; }
.macro { margin: 0 29px 0 28px; }
.acc { display: flex; align-items: center; gap: 2px; }
.views { display: flex; gap: 41px; margin-left: auto; }
.zoom { display: grid; grid-template-columns: 12px 148px 13px 50px; column-gap: 8px; align-items: center; margin-left: 29px; color: #b0b0b0; }
.zoom span { margin-left: 9px; }
.zoom input { appearance: none; width: 148px; height: 12px; background: linear-gradient(#262626, #262626) center / 100% 2px no-repeat; }
.zoom input::-webkit-slider-thumb { appearance: none; width: 2px; height: 8px; background: #262626; }
```
